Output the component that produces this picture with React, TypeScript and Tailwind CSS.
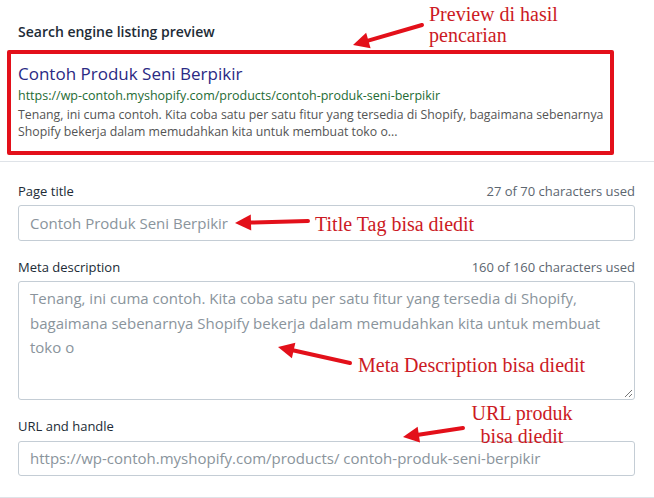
import React from "react";

const sans = { fontFamily: '"Open Sans", "Noto Sans", sans-serif' };
const serif = { fontFamily: '"Liberation Serif", "Times New Roman", serif' };

function Arrow({ x1, y1, x2, y2 }: { x1: number; y1: number; x2: number; y2: number }) {
  const dx = x2 - x1;
  const dy = y2 - y1;
  const len = Math.sqrt(dx * dx + dy * dy);
  const ux = dx / len;
  const uy = dy / len;
  const headLen = 16;
  const headW = 8;
  const bx = x2 - ux * headLen;
  const by = y2 - uy * headLen;
  const px = -uy;
  const py = ux;
  const pts = `${x2},${y2} ${bx + px * headW},${by + py * headW} ${bx - px * headW},${by - py * headW}`;
  return (
    <g>
      <line x1={x1} y1={y1} x2={bx + ux * 2} y2={by + uy * 2} stroke="#e3101a" strokeWidth={4} strokeLinecap="round" />
      <polygon points={pts} fill="#e3101a" />
    </g>
  );
}

export default function App() {
  return (
    <div className="relative w-[654px] h-[498px] bg-white overflow-hidden" style={sans}>
      {/* content */}
      <div className="px-[18px] pt-[22px]">
        <div className="text-[14px] font-semibold text-[#212b36] leading-[20px]">Search engine listing preview</div>
        <div className="pt-[20px]">
          <div className="text-[17px] leading-[24px] text-[#2a2a84]">Contoh Produk Seni Berpikir</div>
          <div className="text-[12.5px] leading-[20px] text-[#1e6b34]">https://wp-contoh.myshopify.com/products/contoh-produk-seni-berpikir</div>
          <div className="text-[12.3px] leading-[17px] text-[#545454]">
            <div>Tenang, ini cuma contoh. Kita coba satu per satu fitur yang tersedia di Shopify, bagaimana sebenarnya</div>
            <div>Shopify bekerja dalam memudahkan kita untuk membuat toko o...</div>
          </div>
        </div>
      </div>
      <div className="mt-[21px] h-px bg-[#dfe3e8]" />

      <div className="px-[18px] pr-[19px] pt-[20px] flex flex-col">
        <div className="flex justify-between text-[13px] leading-[18px]">
          <span className="text-[#212b36]">Page title</span>
          <span className="text-[#5c6670]">27 of 70 characters used</span>
        </div>
        <div className="mt-[5px] h-[36px] border border-[#c4cdd5] rounded-[3px] px-[11px] flex items-center text-[15px] text-[#8a949c]">
          Contoh Produk Seni Berpikir
        </div>

        <div className="mt-[17px] flex justify-between text-[13px] leading-[18px]">
          <span className="text-[#212b36]">Meta description</span>
          <span className="text-[#5c6670]">160 of 160 characters used</span>
        </div>
        <div className="relative mt-[5px] h-[119px] border border-[#c4cdd5] rounded-[3px] px-[11px] pt-[4px] text-[15px] leading-[24.5px] text-[#8a949c]">
          <div>Tenang, ini cuma contoh. Kita coba satu per satu fitur yang tersedia di Shopify,</div>
          <div>bagaimana sebenarnya Shopify bekerja dalam memudahkan kita untuk membuat</div>
          <div>toko o</div>
          <svg className="absolute right-[1px] bottom-[1px]" width="9" height="9" viewBox="0 0 9 9">
            <line x1="1" y1="8" x2="8" y2="1" stroke="#777" strokeWidth="1" />
            <line x1="5" y1="8" x2="8" y2="5" stroke="#777" strokeWidth="1" />
          </svg>
        </div>

        <div className="mt-[17px] text-[13px] leading-[18px] text-[#212b36]">URL and handle</div>
        <div className="mt-[6px] h-[35px] border border-[#c4cdd5] rounded-[3px] px-[11px] flex items-center text-[15px] text-[#8a949c]">
          https://wp-contoh.myshopify.com/products/ contoh-produk-seni-berpikir
        </div>
      </div>
      <div className="absolute left-0 right-0 top-[497px] h-px bg-[#dfe3e8]" />

      {/* annotation overlay */}
      <div className="absolute left-[7px] top-[50px] w-[607px] h-[105px] border-[4px] border-[#e3101a] rounded-[2px]" />
      <svg className="absolute left-0 top-0" width="654" height="498">
        <Arrow x1={422} y1={25} x2={353} y2={45} />
        <Arrow x1={308} y1={221} x2={235} y2={223} />
        <Arrow x1={350} y1={363} x2={278} y2={347} />
        <Arrow x1={463} y1={428} x2={403} y2={437} />
      </svg>
      <div className="absolute left-[429px] top-[4px] text-[20px] leading-[21px] text-[#cc1a24]" style={serif}>
        <div>Preview di hasil</div>
        <div>pencarian</div>
      </div>
      <div className="absolute left-[315px] top-[213px] text-[20px] leading-[22px] text-[#cc1a24]" style={serif}>
        Title Tag bisa diedit
      </div>
      <div className="absolute left-[358px] top-[354px] text-[20px] leading-[22px] text-[#cc1a24]" style={serif}>
        Meta Description bisa diedit
      </div>
      <div className="absolute left-[466px] top-[402px] w-[112px] text-center text-[20px] leading-[23px] text-[#cc1a24]" style={serif}>
        <div>URL produk</div>
        <div>bisa diedit</div>
      </div>
    </div>
  );
}
